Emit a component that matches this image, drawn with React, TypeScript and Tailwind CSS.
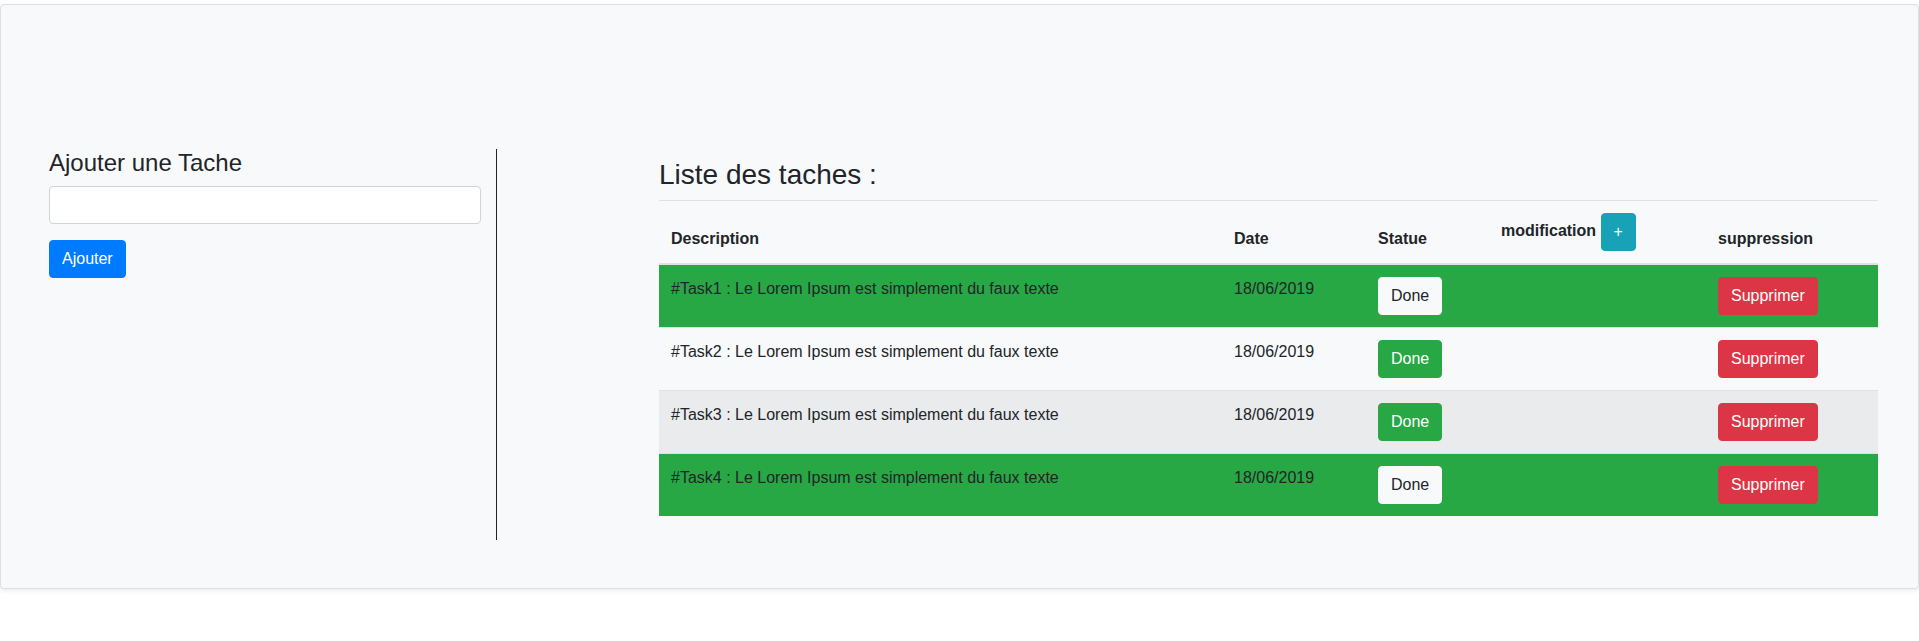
const tasks = [
  { id: 1, text: "#Task1 : Le Lorem Ipsum est simplement du faux texte", date: "18/06/2019", done: true, row: "bg-[#28a745]" },
  { id: 2, text: "#Task2 : Le Lorem Ipsum est simplement du faux texte", date: "18/06/2019", done: false, row: "" },
  { id: 3, text: "#Task3 : Le Lorem Ipsum est simplement du faux texte", date: "18/06/2019", done: false, row: "bg-[#eaebed]" },
  { id: 4, text: "#Task4 : Le Lorem Ipsum est simplement du faux texte", date: "18/06/2019", done: true, row: "bg-[#28a745]" },
];

const btn = "inline-block rounded-[4px] border px-3 py-[6px] text-base leading-6 align-middle";

const App = () => {
  return (
    <div className="min-h-screen bg-white pt-1 font-['Liberation_Sans',Arial,sans-serif] text-base leading-6 text-[#212529]">
      <div className="w-[1919px] rounded-[4px] border border-[#dfdfdf] bg-[#f8f9fa] shadow-[0_2px_4px_rgba(0,0,0,0.075)]">
        <div className="flex pl-[33px] pr-[40px] pt-[144px] pb-[48px]">
          {/* formulaire */}
          <div className="w-[463px] shrink-0 border-r border-[#212529] px-[15px]">
            <h4 className="mb-2 text-[24px] leading-[1.2] font-normal">Ajouter une Tache</h4>
            <input
              type="text"
              className="block h-[38px] w-full rounded-[4px] border border-[#ced4da] bg-white px-3 outline-none"
            />
            <button className={`${btn} mt-4 border-[#007bff] bg-[#007bff] text-white`}>Ajouter</button>
          </div>

          {/* liste */}
          <div className="ml-[162px] flex-1">
            <h3 className="mt-[9px] mb-2 text-[28px] leading-[1.2] font-normal">Liste des taches :</h3>
            <table className="mb-[24px] w-full border-collapse">
              <thead>
                <tr>
                  <th className="w-[563px] border-t border-b-2 border-[#dee2e6] p-3 text-left align-bottom font-bold">Description</th>
                  <th className="w-[144px] border-t border-b-2 border-[#dee2e6] p-3 text-left align-bottom font-bold">Date</th>
                  <th className="w-[123px] border-t border-b-2 border-[#dee2e6] p-3 text-left align-bottom font-bold">Statue</th>
                  <th className="w-[217px] border-t border-b-2 border-[#dee2e6] p-3 text-left align-bottom font-bold">
                    modification{" "}
                    <button className={`${btn} border-[#17a2b8] bg-[#17a2b8] font-normal text-white`}>+</button>
                  </th>
                  <th className="border-t border-b-2 border-[#dee2e6] p-3 text-left align-bottom font-bold">suppression</th>
                </tr>
              </thead>
              <tbody>
                {tasks.map((t) => (
                  <tr key={t.id} className={t.row}>
                    <td className="border-t border-[#dee2e6] p-3 align-top">{t.text}</td>
                    <td className="border-t border-[#dee2e6] p-3 align-top">{t.date}</td>
                    <td className="border-t border-[#dee2e6] p-3 align-top">
                      {t.done ? (
                        <button className={`${btn} border-[#f8f9fa] bg-[#f8f9fa] text-[#212529]`}>Done</button>
                      ) : (
                        <button className={`${btn} border-[#28a745] bg-[#28a745] text-white`}>Done</button>
                      )}
                    </td>
                    <td className="border-t border-[#dee2e6] p-3 align-top"></td>
                    <td className="border-t border-[#dee2e6] p-3 align-top">
                      <button className={`${btn} border-[#dc3545] bg-[#dc3545] text-white`}>Supprimer</button>
                    </td>
                  </tr>
                ))}
              </tbody>
            </table>
          </div>
        </div>
      </div>
    </div>
  );
};

export default App;
